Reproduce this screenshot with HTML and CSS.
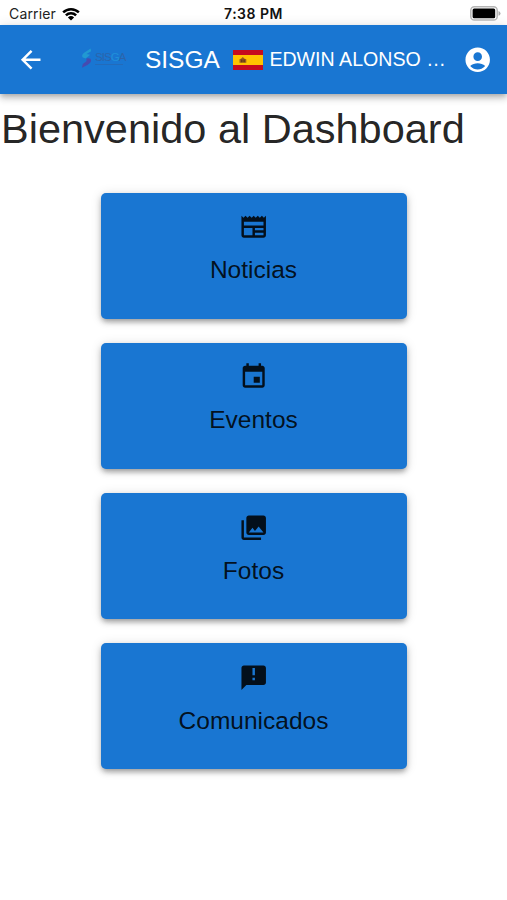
FILE: index.html
```html
<!DOCTYPE html>
<html lang="es">
<head>
<meta charset="utf-8">
<title>SISGA</title>
<link rel="stylesheet" href="styles.css">
</head>
<body>
<div class="status">
  <div class="carrier"><span>Carrier</span>
    <svg class="wifi" viewBox="0 0 18 14"><path d="M0.3 4.5A12.5 12.5 0 0 1 17.7 4.5L16 6.3A10 10 0 0 0 2 6.3ZM3 7.4A8.6 8.6 0 0 1 15 7.4L13.2 9.2A6.1 6.1 0 0 0 4.8 9.2ZM5.9 10.4A4.5 4.5 0 0 1 12.1 10.4L9 13.6Z"/></svg>
  </div>
  <div class="time">7:38 PM</div>
  <svg class="battery" viewBox="0 0 31 15"><rect x=".8" y=".8" width="26.4" height="13.2" rx="3.6" fill="#fff" stroke="#b5b5b5" stroke-width="1.5"/><rect x="2.6" y="2.6" width="22.6" height="9.6" rx="1.5"/><path d="M28.5 5q2 .8 2 2.4t-2 2.4z" fill="#aaa"/></svg>
</div>
<header class="appbar">
  <svg class="icon back" viewBox="0 0 24 24"><path d="M20 11H7.83l5.59-5.59L12 4l-8 8 8 8 1.41-1.41L7.83 13H20v-2z"/></svg>
  <div class="logo">
    <svg class="logo-mark" viewBox="0 0 12 24"><path d="M10.5 1L3 6Q0 9 2 11l3 1 5-4-4-1 5-3z" fill="#24a5d3"/><path d="M6 12q5-1 5 2 0 3-4 5l-6 3 1-4 4-3z" fill="#553da5"/></svg>
    <div class="logo-text"><span class="logo-name">SIS<b>G</b>A</span><span class="logo-line"></span></div>
  </div>
  <div class="brand">SISGA</div>
  <svg class="flag" viewBox="0 0 30 20"><path fill="#c60b1e" d="M0 0h30v20H0z"/><path fill="#ffc400" d="M0 5h30v10H0z"/><path d="M6.5 12.8V9.2L8 8.7 9.8 7l1.8 1.7 1.7.5v3.6z" fill="#9c5a1c"/><path d="M8.2 9.4h1.2v2.8H8.2zM10.5 9.4h1.2v2.8h-1.2z" fill="#593514"/></svg>
  <div class="user">EDWIN ALONSO …</div>
  <svg class="icon account" viewBox="0 0 24 24"><path d="M12 2C6.48 2 2 6.48 2 12s4.48 10 10 10 10-4.48 10-10S17.52 2 12 2zm0 4c1.93 0 3.5 1.57 3.5 3.5S13.93 13 12 13s-3.5-1.57-3.5-3.5S10.07 6 12 6zm0 14c-2.03 0-4.43-.82-6.14-2.88C7.55 15.8 9.68 15 12 15s4.45.8 6.14 2.12C16.43 19.18 14.03 20 12 20z"/></svg>
</header>
<main>
  <h1>Bienvenido al Dashboard</h1>
  <div class="cards">
    <div class="card"><svg class="icon" viewBox="0 0 24 24"><path d="m22 3-1.67 1.67L18.67 3 17 4.67 15.33 3l-1.66 1.67L12 3l-1.67 1.67L8.67 3 7 4.67 5.33 3 3.67 4.67 2 3v16c0 1.1.9 2 2 2h16c1.1 0 2-.9 2-2V3zM11 19H4v-6h7v6zm9 0h-7v-2h7v2zm0-4h-7v-2h7v2zm0-4H4V8h16v3z"/></svg><span>Noticias</span></div>
    <div class="card"><svg class="icon" viewBox="0 0 24 24"><path d="M17 12h-5v5h5v-5zM16 1v2H8V1H6v2H5c-1.11 0-1.99.9-1.99 2L3 19c0 1.1.89 2 2 2h14c1.1 0 2-.9 2-2V5c0-1.1-.9-2-2-2h-1V1h-2zm3 18H5V8h14v11z"/></svg><span>Eventos</span></div>
    <div class="card"><svg class="icon" viewBox="0 0 24 24"><path d="M22 16V4c0-1.1-.9-2-2-2H8c-1.1 0-2 .9-2 2v12c0 1.1.9 2 2 2h12c1.1 0 2-.9 2-2zm-11-4 2.03 2.71L16 11l4 5H8l3-4zM2 6v14c0 1.1.9 2 2 2h14v-2H4V6H2z"/></svg><span>Fotos</span></div>
    <div class="card"><svg class="icon" viewBox="0 0 24 24"><path d="M20 2H4c-1.1 0-1.99.9-1.99 2L2 22l4-4h14c1.1 0 2-.9 2-2V4c0-1.1-.9-2-2-2zm-7 12h-2v-2h2v2zm0-4h-2V4h2v6z"/></svg><span>Comunicados</span></div>
  </div>
</main>
</body>
</html>
```
FILE: styles.css
```css
* { box-sizing: border-box; }
body {
  margin: 0;
  min-height: 100vh;
  background: #fff;
  color: rgba(0, 0, 0, .87);
  font-family: "Liberation Sans", Arial, sans-serif;
}
svg { display: block; flex: none; }
.status {
  height: 25px;
  display: grid;
  grid-template-columns: 1fr auto 1fr;
  align-items: center;
  padding: 2px 6px 0 9px;
  font-family: Inter, sans-serif;
  font-size: 14px;
  line-height: 20px;
  color: #222;
}
.carrier { display: flex; align-items: center; gap: 6px; letter-spacing: .15px; }
.wifi { width: 18px; height: 14px; fill: #000; }
.time { font-weight: 600; letter-spacing: .5px; padding-right: 3px; color: #111; }
.battery { width: 31px; height: 15px; justify-self: end; }
.icon { width: 29.4px; height: 29.4px; fill: currentColor; }
.appbar {
  height: 69px;
  display: flex;
  align-items: center;
  padding: 0 15px 0 15.5px;
  background: #1976d2;
  color: #fff;
  box-shadow: 0 2px 5px -1px rgba(0, 0, 0, .2), 0 5px 6px rgba(0, 0, 0, .14), 0 1px 12px rgba(0, 0, 0, .12);
}
.logo {
  width: 44px;
  margin-left: 36px;
  display: flex;
  align-items: center;
  gap: 3px;
  opacity: .75;
  margin-top: -3px;
}
.logo-mark { width: 11px; height: 23px; }
.logo-text { display: flex; flex-direction: column; gap: 2px; }
.logo-name { font-size: 11.5px; line-height: 10px; letter-spacing: -.9px; color: #315f9f; }
.logo-name b { font-weight: 400; color: #2299dc; }
.logo-line { width: 28px; height: 1px; background: #315f9f; opacity: .6; }
.brand { width: 75px; margin-left: 20px; font-size: 24.5px; line-height: 34px; white-space: nowrap; }
.flag { width: 30px; height: 20px; margin-left: 13px; }
.user { flex: 1; margin-left: 6.5px; font-size: 19.6px; line-height: 28px; white-space: nowrap; padding-bottom: 1px; }
h1 {
  margin: 0;
  padding: 9px 0 0 1px;
  font-size: 41.5px;
  font-weight: 400;
  line-height: 51px;
}
.cards {
  display: flex;
  flex-direction: column;
  align-items: center;
  gap: 24.3px;
  padding-top: 38.6px;
}
.card {
  width: 306px;
  height: 126px;
  padding-top: 19.5px;
  display: flex;
  flex-direction: column;
  align-items: center;
  gap: 8.5px;
  border-radius: 5px;
  background: #1976d2;
  box-shadow: 0 4px 5px -2px rgba(0, 0, 0, .22), 0 3px 6px rgba(0, 0, 0, .18), 0 1px 12px rgba(0, 0, 0, .12);
}
.card span { font-size: 24.5px; line-height: 39px; }
```
